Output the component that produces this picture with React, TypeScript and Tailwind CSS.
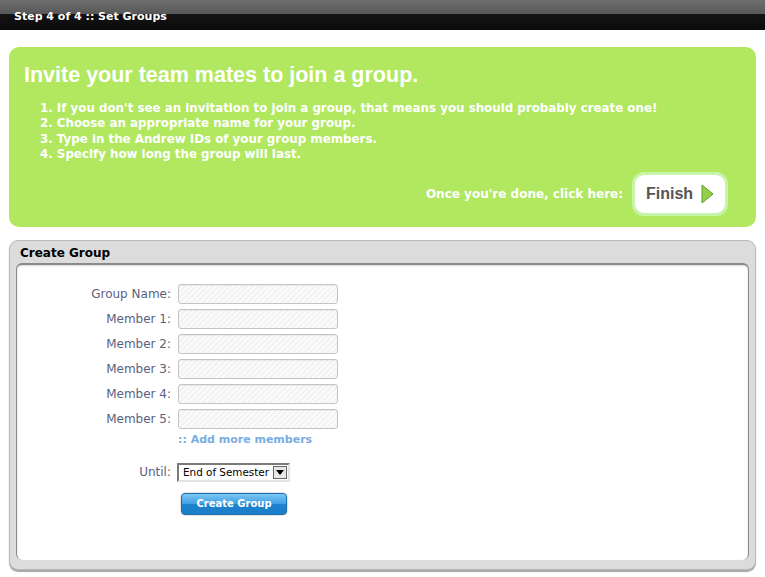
import React from "react"

const verdana = { fontFamily: '"DejaVu Sans", Verdana, sans-serif' }

function TextInput() {
  return (
    <div className="h-[20px] w-[160px] rounded-[3px] border border-[#c4c4c4] bg-[repeating-linear-gradient(135deg,#f3f3f3_0px,#f3f3f3_2px,#fbfbfb_2px,#fbfbfb_4px)] shadow-[inset_0_1px_1px_rgba(0,0,0,0.06)]" />
  )
}

const rows = ["Group Name:", "Member 1:", "Member 2:", "Member 3:", "Member 4:", "Member 5:"]

const steps = [
  "1. If you don't see an invitation to join a group, that means you should probably create one!",
  "2. Choose an appropriate name for your group.",
  "3. Type in the Andrew IDs of your group members.",
  "4. Specify how long the group will last.",
]

export default function App() {
  return (
    <div className="min-h-[577px] w-[765px] bg-white pb-[6px]" style={verdana}>
      {/* Top bar */}
      <div className="flex h-[30px] items-center bg-[linear-gradient(#6e6e6e,#575757_48%,#141414_48%,#0b0b0b)] pl-[14px] pt-[4px]">
        <span className="text-[11px] font-bold text-white">Step 4 of 4 :: Set Groups</span>
      </div>

      {/* Green instructions */}
      <div className="mx-[9px] mt-[17px] h-[180px] rounded-[10px] bg-[#b1e860] pl-[15px] pt-[14px]">
        <h1
          className="text-[21.5px] font-bold leading-[28px] text-white"
          style={{ fontFamily: '"Liberation Sans", Arial, sans-serif' }}
        >
          Invite your team mates to join a group.
        </h1>
        <ol className="mt-[12px] ml-[16px] text-[11.85px] font-bold leading-[15.3px] text-white">
          {steps.map((s) => (
            <li key={s}>{s}</li>
          ))}
        </ol>
        <div className="mt-[10px] mr-[28px] flex items-center justify-end gap-[9px]">
          <span className="text-[12px] font-bold text-white">Once you're done, click here:</span>
          <div className="rounded-[12px] bg-[#c6f4aa] p-[3px]">
            <div className="flex h-[38px] w-[90px] items-center justify-center gap-[8px] rounded-[9px] bg-white">
              <span
                className="text-[16px] font-bold text-[#555555]"
                style={{ fontFamily: '"Liberation Sans", Arial, sans-serif' }}
              >
                Finish
              </span>
              <svg width="13" height="20" viewBox="0 0 13 20">
                <path d="M1 1 L12 10 L1 19 Z" fill="#92d04a" stroke="#5f9a2a" strokeWidth="1" strokeLinejoin="round" />
              </svg>
            </div>
          </div>
        </div>
      </div>

      {/* Create group panel */}
      <div className="mx-[9px] mt-[13px] rounded-[9px] border border-[#b9b9b9] bg-[#dcdcdc] px-[6px] pb-[9px] shadow-[0_2px_1px_rgba(0,0,0,0.35)]">
        <div className="flex h-[22px] items-center pl-[4px] pt-[1px]">
          <span className="text-[12px] font-bold text-black">Create Group</span>
        </div>
        <div className="h-[297px] rounded-[6px] border-t-2 border-l border-r border-[#8a8a8a] border-b-[#e8e8e8] bg-white pt-[19px] shadow-[inset_0_1px_2px_rgba(0,0,0,0.15)]">
          <div className="grid grid-cols-[154px_160px] gap-x-[7px] gap-y-[5px]">
            {rows.map((r) => (
              <React.Fragment key={r}>
                <div className="flex h-[20px] items-center justify-end text-[12px] text-[#5a6180]">{r}</div>
                <TextInput />
              </React.Fragment>
            ))}
            <div />
            <div className="-mt-[2px] text-[11px] font-bold text-[#78ade3]">:: Add more members</div>
            <div className="mt-[9px] flex h-[19px] items-center justify-end text-[12px] text-[#5a6180]">Until:</div>
            <div className="mt-[9px] -ml-[1px] flex h-[19px] w-[113px] items-center justify-between border-2 border-t-[#7a7a7a] border-l-[#7a7a7a] border-r-[#e4e4e4] border-b-[#e4e4e4] bg-white pl-[4px] pr-[1px]">
              <span className="whitespace-nowrap text-[10.4px] leading-none text-black">End of Semester</span>
              <div className="flex h-[13px] w-[14px] items-center justify-center border border-[#666] bg-[#e8e8e8]">
                <svg width="8" height="5" viewBox="0 0 8 5">
                  <path d="M0 0 H8 L4 5 Z" fill="#000" />
                </svg>
              </div>
            </div>
            <div />
            <div className="mt-[5px] ml-[2px] w-fit rounded-[5px] bg-[#e6e6e6] p-[1px]">
              <div className="flex h-[22px] w-[106px] items-center justify-center rounded-[4px] border border-[#1c6eb0] bg-[linear-gradient(#7cc8f4,#3d9ee2_50%,#1f84d0_51%,#1a7cc6)] text-[10px] font-bold text-white">
                Create Group
              </div>
            </div>
          </div>
        </div>
      </div>
    </div>
  )
}
